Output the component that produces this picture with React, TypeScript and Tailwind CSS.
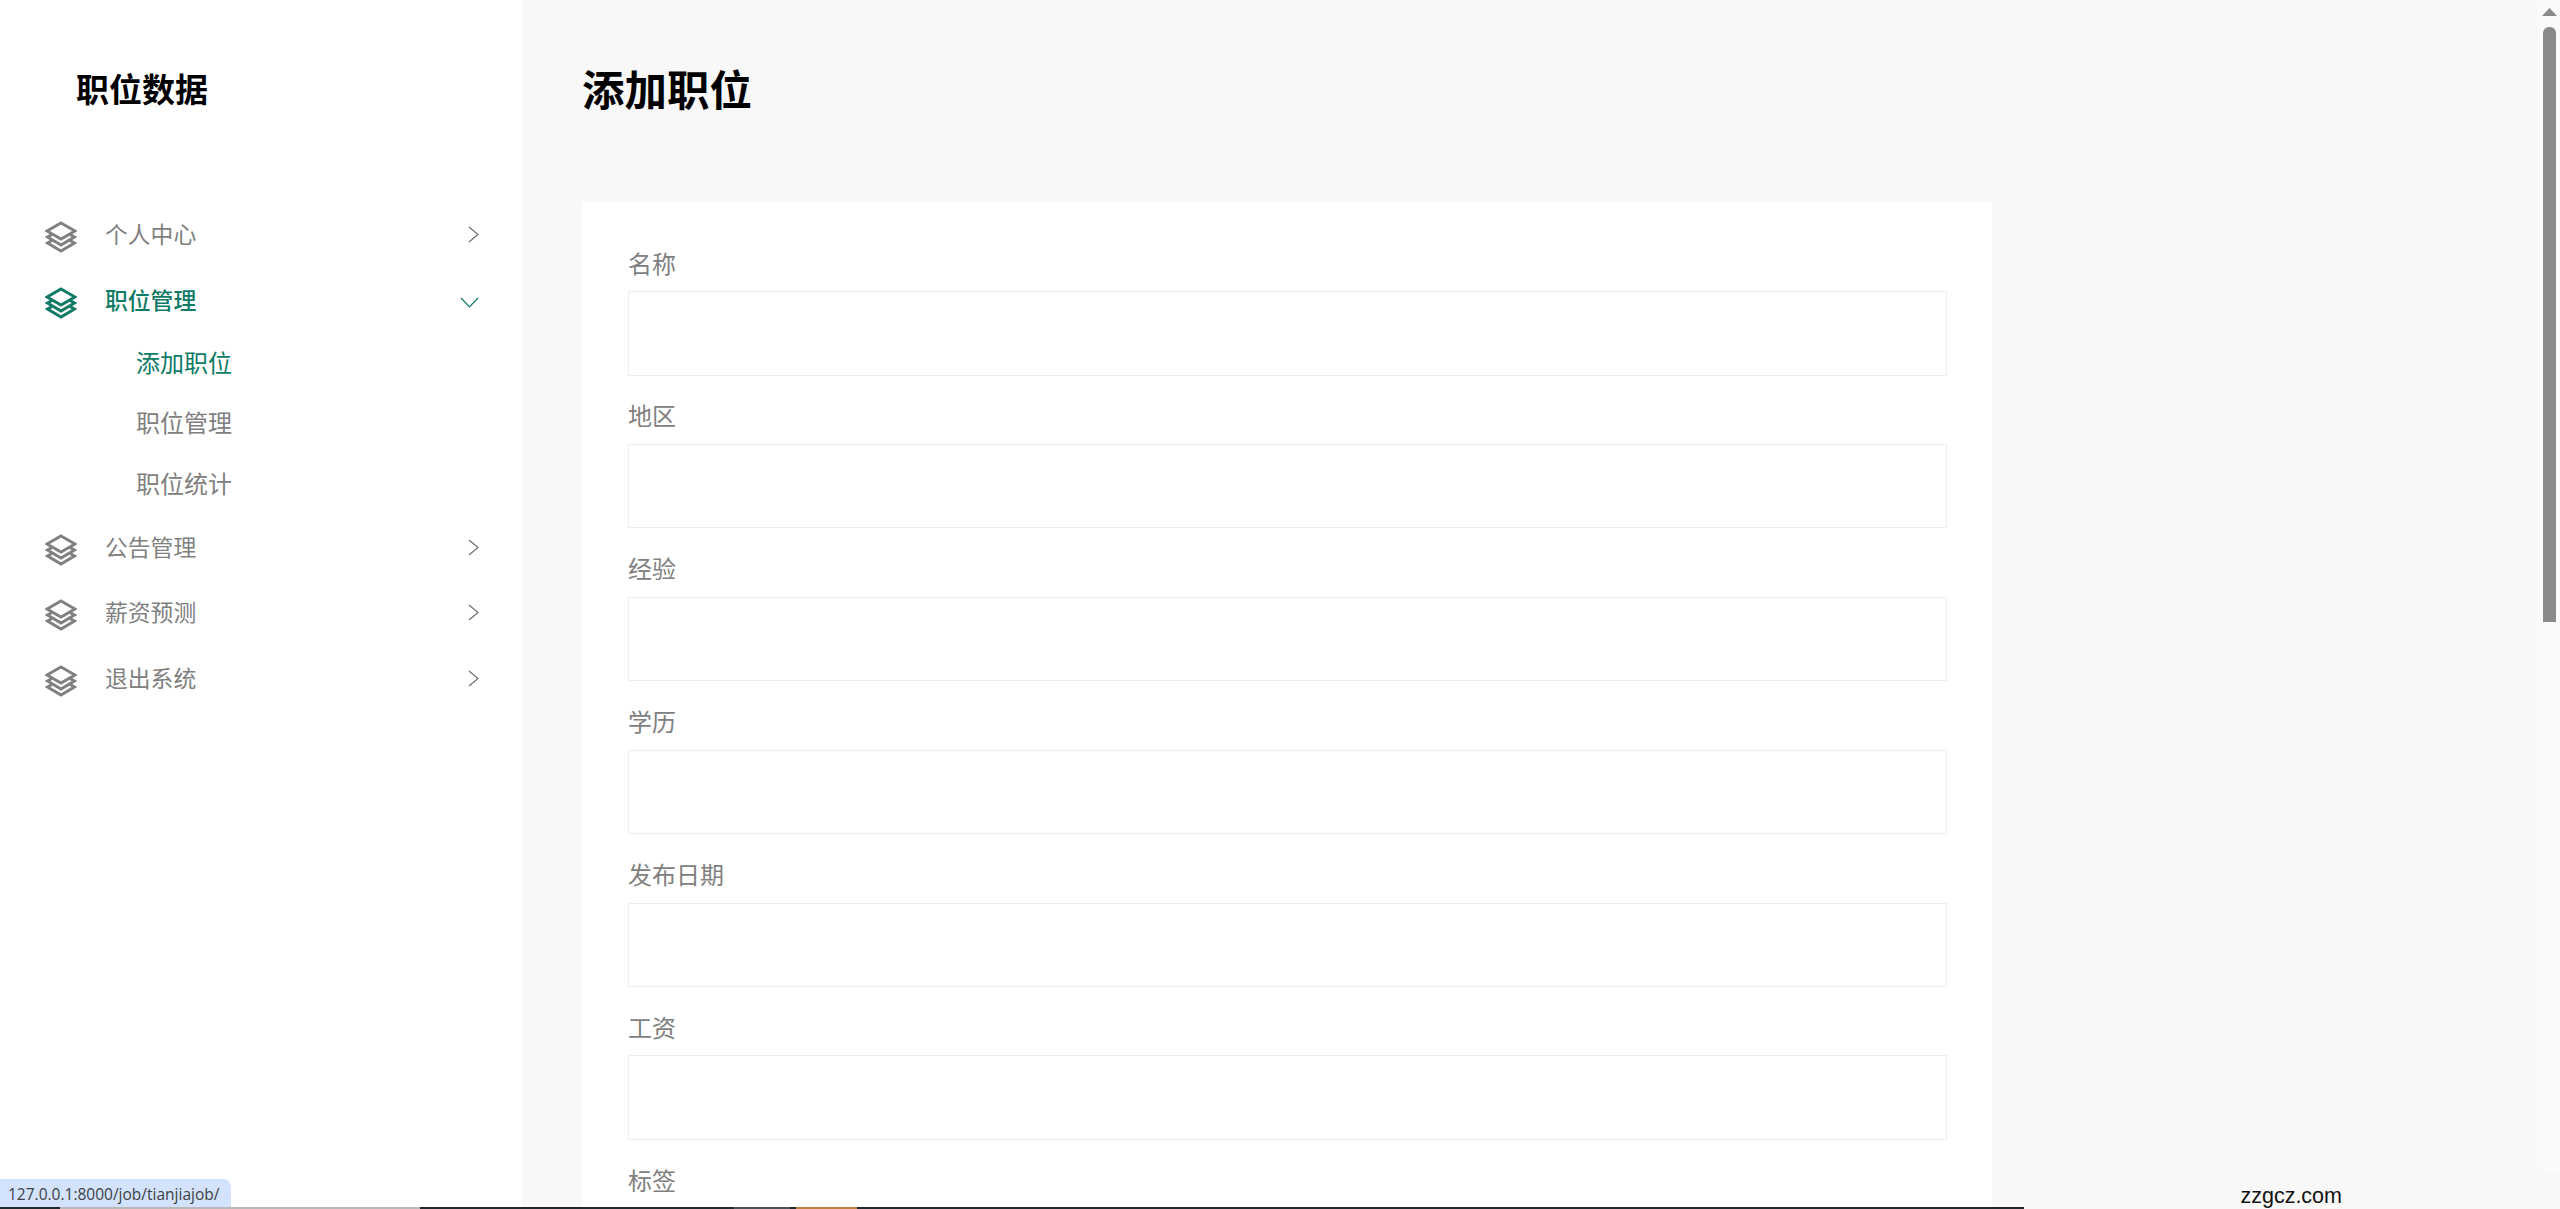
import React from 'react';

const menuFont = { fontFamily: '"Noto Sans CJK SC", "Liberation Sans", sans-serif' };

const fields = ['名称', '地区', '经验', '学历', '发布日期', '工资', '标签'];

const LayersIcon = ({ className }: { className: string }) => (
  <svg viewBox="0 0 32 32" width="32" height="32" fill="none" stroke="currentColor" strokeWidth="3" className={className}>
    <path d="M16 2 L30 10 L16 18 L2 10 Z" />
    <path d="M7 13.5 L2.5 16 L16 24 L29.5 16 L25 13.5" />
    <path d="M7 19.5 L2.5 22 L16 30 L29.5 22 L25 19.5" />
  </svg>
);

const ChevronRight = () => (
  <svg viewBox="0 0 11 17" width="11" height="17" fill="none" stroke="#707070" strokeWidth="1.2">
    <path d="M1 1 L10 8.5 L1 16" />
  </svg>
);

const ChevronDown = () => (
  <svg viewBox="0 0 19 11" width="19" height="11" fill="none" stroke="#0f7b66" strokeWidth="1.2">
    <path d="M1 1 L9.5 10 L18 1" />
  </svg>
);

const MenuItem = ({ label, open }: { label: string; open?: boolean }) => (
  <div className={`flex h-[65.5px] items-center pl-[45px] ${open ? 'text-[#0f7b66]' : 'text-[#808080]'}`}>
    <LayersIcon className="mt-[5px] shrink-0" />
    <span className={`mb-[1px] ml-[28px] flex-1 text-[22.8px] ${open ? 'font-medium' : ''}`}>{label}</span>
    {open ? (
      <span className="mr-[43px] mt-[4px] flex"><ChevronDown /></span>
    ) : (
      <span className="mr-[43px] flex"><ChevronRight /></span>
    )}
  </div>
);

const SubItem = ({ label, active }: { label: string; active?: boolean }) => (
  <div className={`flex h-[60.5px] items-center pb-[3px] pl-[136px] text-[24px] ${active ? 'text-[#0f7b66]' : 'text-[#808080]'}`}>
    {label}
  </div>
);

export default function App() {
  return (
    <div className="relative flex h-[1209px] overflow-hidden bg-[#f8f8f8]" style={menuFont}>
      <aside className="w-[522px] shrink-0 bg-white">
        <div className="flex h-[178px] items-center pl-[76px] text-[33px] font-bold text-black">职位数据</div>
        <nav className="mt-[24px]">
          <MenuItem label="个人中心" />
          <MenuItem label="职位管理" open />
          <SubItem label="添加职位" active />
          <SubItem label="职位管理" />
          <SubItem label="职位统计" />
          <MenuItem label="公告管理" />
          <MenuItem label="薪资预测" />
          <MenuItem label="退出系统" />
        </nav>
      </aside>

      <main className="min-w-0 flex-1 pl-[60px]">
        <div className="flex h-[176px] items-center text-[42.5px] font-bold text-black">添加职位</div>
        <div className="mt-[26px] w-[1410px] bg-white pl-[46px] pr-[45px] pt-[42px]">
          {fields.map((f) => (
            <div key={f} className="mb-[21.3px]">
              <div className="flex h-[37px] items-center text-[24px] text-[#808080]">{f}</div>
              <div className="mt-[10px] h-[84.6px] border border-[#eeeeee] bg-white" />
            </div>
          ))}
        </div>
      </main>

      <div className="flex h-[1173px] w-[22px] shrink-0 flex-col items-center self-start bg-[#fafafa] pt-[8px]">
        <svg viewBox="0 0 15 8" width="15" height="8" fill="#8a8a8a">
          <path d="M7.5 0 L15 8 L0 8 Z" />
        </svg>
        <div className="mt-[11px] h-[595px] w-[13px] rounded-t-[6px] bg-[#8a8a8a]" />
      </div>

      <div className="absolute bottom-[2px] left-0 flex h-[28px] w-[231px] items-center rounded-tr-[8px] bg-[#d3e3fd] pl-[8px] pt-[4px] text-[15.5px] text-[#3c4043]" style={{ fontFamily: '"Open Sans", "Liberation Sans", sans-serif' }}>
        <span className="whitespace-nowrap">127.0.0.1:8000/job/tianjiajob/</span>
      </div>

      <div className="absolute bottom-[1px] right-[218px] text-[21.5px] leading-[24px] text-[#111111]" style={{ fontFamily: '"Liberation Sans", sans-serif' }}>
        zzgcz.com
      </div>

      <div className="absolute bottom-0 left-0 flex h-[2px] w-[2024px] bg-[#1f2a30]">
        <div className="w-[60px]" />
        <div className="w-[360px] bg-[#b8b8b8]" />
        <div className="w-[314px]" />
        <div className="w-[56px] bg-[#4a5358]" />
        <div className="w-[6px]" />
        <div className="w-[61px] bg-[#c07f3a]" />
      </div>
    </div>
  );
}
